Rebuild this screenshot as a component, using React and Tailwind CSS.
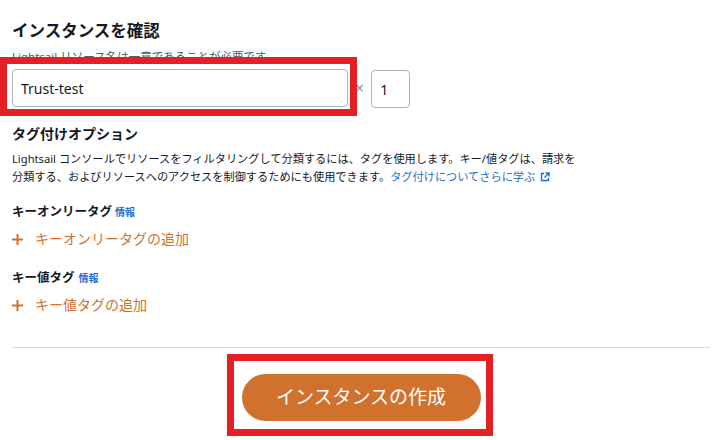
import React from 'react';

const Plus = () => (
    <svg width="11" height="11" viewBox="0 0 11 11" className="shrink-0">
        <path d="M5.5 0v11M0 5.5h11" stroke="#d0722d" strokeWidth="2" />
    </svg>
);

const ExternalIcon = () => (
    <svg width="10" height="10" viewBox="0 0 10 10" className="inline-block ml-[5px] align-[-1px]">
        <path d="M4 1.5H1.5v7h7V6" fill="none" stroke="#1f6fc5" strokeWidth="1.4" />
        <path d="M5.5 1h3.5v3.5M9 1L4.5 5.5" fill="none" stroke="#1f6fc5" strokeWidth="1.4" />
    </svg>
);

const App = () => {
    return (
        <div
            className="relative w-[718px] h-[440px] bg-white overflow-hidden text-[#16191f]"
            style={{ fontFamily: '"Noto Sans", "Noto Sans CJK JP", sans-serif' }}
        >
            <div className="pl-[12px] pr-[8px] pt-[21px]">
                <h2 className="text-[16.5px] leading-[20px] font-bold">インスタンスを確認</h2>
                <p className="mt-[9px] text-[11.5px] leading-[14px] text-[#545b64]">
                    Lightsail リソース名は一意であることが必要です
                </p>

                <div className="mt-[4px] flex items-center">
                    <div className="w-[336px] h-[38px] border border-[#aab7b8] rounded-[4px] flex items-center px-[8px] text-[14px]">
                        Trust-test
                    </div>
                    <span className="ml-[7px] text-[16px] leading-none text-[#879596]">×</span>
                    <div className="ml-[7px] mt-[2px] w-[39px] h-[38px] border border-[#aab7b8] rounded-[4px] flex items-center px-[8px] text-[14px]">
                        1
                    </div>
                </div>

                <h3 className="mt-[17px] text-[14px] leading-[18px] font-bold">タグ付けオプション</h3>
                <div className="mt-[7px] text-[11.2px] leading-[18px] whitespace-nowrap">
                    <div>Lightsail コンソールでリソースをフィルタリングして分類するには、タグを使用します。キー/値タグは、請求を</div>
                    <div>
                        分類する、およびリソースへのアクセスを制御するためにも使用できます。
                        <span className="text-[#1f6fc5]">タグ付けについてさらに学ぶ</span>
                        <ExternalIcon />
                    </div>
                </div>

                <div className="mt-[17px] flex items-center leading-[18px]">
                    <span className="text-[12.5px] font-bold">キーオンリータグ</span>
                    <span className="ml-[3px] text-[10px] font-bold text-[#1f6fc5]">情報</span>
                </div>
                <div className="mt-[9px] flex items-center leading-[18px]">
                    <Plus />
                    <span className="ml-[12px] text-[14px] text-[#d0722d]">キーオンリータグの追加</span>
                </div>

                <div className="mt-[21px] flex items-center leading-[18px]">
                    <span className="text-[12.5px] font-bold">キー値タグ</span>
                    <span className="ml-[4px] text-[10px] font-bold text-[#1f6fc5]">情報</span>
                </div>
                <div className="mt-[9px] flex items-center leading-[18px]">
                    <Plus />
                    <span className="ml-[12px] text-[14px] text-[#d0722d]">キー値タグの追加</span>
                </div>

                <div className="mt-[33px] h-px bg-[#d5dbdb]" />

                <div className="mt-[26px] flex justify-center">
                    <button className="w-[239px] h-[47px] rounded-full bg-[#d0722d] text-white text-[19px] font-normal leading-none">
                        インスタンスの作成
                    </button>
                </div>
            </div>

            <div className="absolute left-0 top-[57px] w-[357px] h-[59px] border-[7px] border-[#e41f26]" />
            <div className="absolute left-[227px] top-[354px] w-[266px] h-[82px] border-[7px] border-[#e41f26]" />
        </div>
    );
};

export default App;
